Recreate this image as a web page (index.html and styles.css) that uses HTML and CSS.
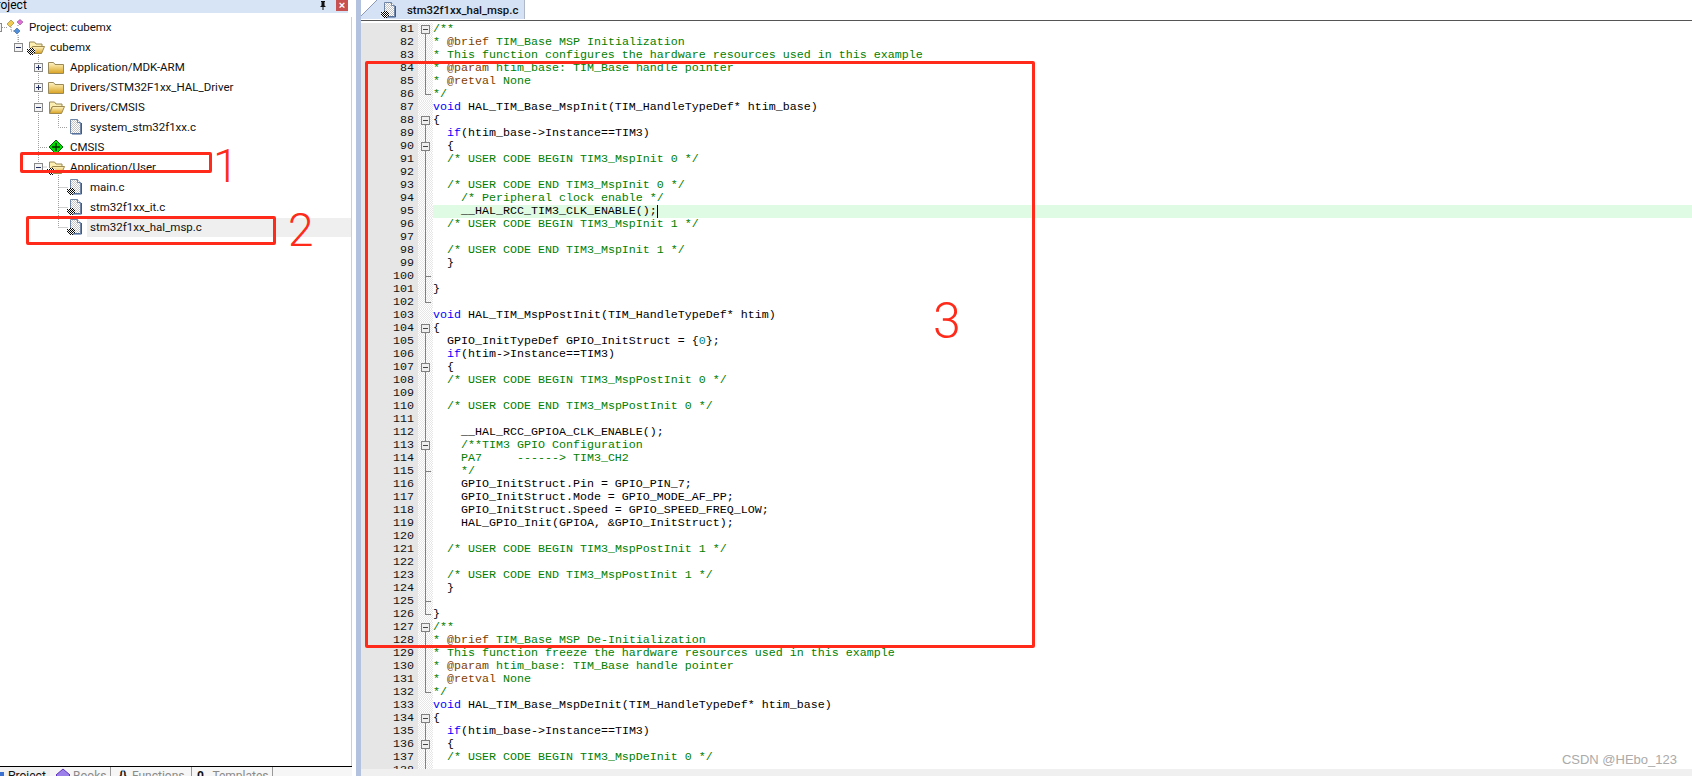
FILE: index.html
```html
<!DOCTYPE html>
<html lang="en">
<head>
<meta charset="utf-8">
<title>stm32f1xx_hal_msp.c</title>
<link rel="stylesheet" href="styles.css">
</head>
<body>
<svg class="defs" aria-hidden="true">
  <defs>
    <linearGradient id="gold" x1="0" y1="0" x2="0" y2="1"><stop offset="0" stop-color="#fff6c8"/><stop offset="1" stop-color="#d9a21f"/></linearGradient>
    <pattern id="chk" width="2" height="2" patternUnits="userSpaceOnUse"><rect width="2" height="2" fill="#fff"/><rect width="1" height="1" fill="#000"/><rect x="1" y="1" width="1" height="1" fill="#000"/></pattern>
    <pattern id="dith" width="2" height="2" patternUnits="userSpaceOnUse"><rect width="2" height="2" fill="#fff"/><rect width="1" height="1" fill="#c4c4c4"/><rect x="1" y="1" width="1" height="1" fill="#c4c4c4"/></pattern>
    <symbol id="folder" viewBox="0 0 18 16"><path d="M1.5 3.5h5l1.5 2h8.500v9h-15z" fill="url(#gold)" stroke="#9a8a5a"/></symbol>
    <symbol id="open" viewBox="0 0 18 16"><path d="M2.500 3h5l1.500 2h6v3H5L2.500 14z" fill="#fbeeb0" stroke="#9a8a5a"/><path d="M2.500 14.500 5.500 7.500h12l-3 7z" fill="url(#gold)" stroke="#a08a50"/></symbol>
    <symbol id="file" viewBox="0 0 18 16"><path d="M3.500.5h7l3 3v11h-10z" fill="url(#dith)" stroke="#6f86a8"/><path d="M10.500.5v3h3" fill="#fff" stroke="#6f86a8"/><path d="M14.500 4v11H5" fill="none" stroke="#3c5c90"/></symbol>
    <symbol id="key" viewBox="0 0 18 16"><path d="M2 9h4v1h2v4H6v2H2v-2H0v-4h2z" fill="url(#chk)"/></symbol>
    <symbol id="gem" viewBox="0 0 18 16"><path d="M9 1l7 7-7 7-7-7z" fill="#00e000" stroke="#006000"/><path d="M9 4v8M5 8h8" stroke="#003000" stroke-width="1.500"/></symbol>
    <symbol id="proj" viewBox="0 0 18 16"><path d="M1 5l4-4 3 3-4 4z" fill="#f2cc50" stroke="#8a7a30" stroke-width=".6"/><path d="M9 9l3-3 3 3-3 3z" fill="#4f8fdc" stroke="#305a90" stroke-width=".6" transform="translate(-1 3)"/><path d="M11 3l3-2.500L17 3l-3 3z" fill="#e070d8" stroke="#8a4a90" stroke-width=".6"/><path d="M5 8v4h4M12 6v2" fill="none" stroke="#8a8a8a" stroke-dasharray="1 1"/></symbol>
  </defs>
</svg>
<div class="app">
  <aside class="side">
    <div class="title">
      <span class="title-text">Project</span>
      <svg class="pin" viewBox="0 0 8 9"><path d="M2 0h4v1H5.500v3.500L7 6H4.500v3h-1V6H1l1.500-1.500V1H2z" fill="#111"/></svg>
      <span class="close">×</span>
    </div>
    <div class="tree">
      <svg class="guides" viewBox="0 17 352 749">
        <path d="M2 27.500h5M18 35v9M38.500 53v94.500H47M38.500 147v20H47M58.500 113v14.500H68M58.500 173v54.500M58.500 187.500H68M58.500 207.500H68M58.500 227.500H68M18.500 37v10" fill="none" stroke="#a0a0a0" stroke-dasharray="1 1"/>
      </svg>
      <div class="row d0"><span class="exp"></span><svg class="ic"><use href="#proj"/></svg><span class="lbl">Project: cubemx</span></div>
      <div class="row d1"><span class="exp minus"></span><svg class="ic"><use href="#open"/><use href="#key"/></svg><span class="lbl">cubemx</span></div>
      <div class="row d2"><span class="exp plus"></span><svg class="ic"><use href="#folder"/></svg><span class="lbl">Application/MDK-ARM</span></div>
      <div class="row d2"><span class="exp plus"></span><svg class="ic"><use href="#folder"/></svg><span class="lbl">Drivers/STM32F1xx_HAL_Driver</span></div>
      <div class="row d2"><span class="exp minus"></span><svg class="ic"><use href="#open"/></svg><span class="lbl">Drivers/CMSIS</span></div>
      <div class="row d3"><span class="exp none"></span><svg class="ic"><use href="#file"/></svg><span class="lbl">system_stm32f1xx.c</span></div>
      <div class="row d2"><span class="exp none"></span><svg class="ic"><use href="#gem"/></svg><span class="lbl">CMSIS</span></div>
      <div class="row d2"><span class="exp minus"></span><svg class="ic"><use href="#open"/><use href="#key"/></svg><span class="lbl">Application/User</span></div>
      <div class="row d3"><span class="exp none"></span><svg class="ic"><use href="#file"/><use href="#key"/></svg><span class="lbl">main.c</span></div>
      <div class="row d3"><span class="exp none"></span><svg class="ic"><use href="#file"/><use href="#key"/></svg><span class="lbl">stm32f1xx_it.c</span></div>
      <div class="row d3"><span class="exp none"></span><svg class="ic"><use href="#file"/><use href="#key"/></svg><span class="lbl sel">stm32f1xx_hal_msp.c</span></div>
    </div>
    <div class="tabs">
      <span class="tab t-project"><i class="t-blue"></i>Project</span>
      <span class="tab t-books"><svg class="t-gem" viewBox="0 0 16 16"><path d="M8 1l7 6-7 7-7-7z" fill="#9a80e8" stroke="#6030c0"/></svg>Books</span>
      <span class="tab t-funcs"><b>{}</b>Functions</span>
      <span class="tab t-temps"><b>0.</b>Templates</span>
    </div>
  </aside>
  <div class="splitter"></div>
  <main class="main">
    <div class="tabbar">
      <div class="filetab">
        <svg class="ic tab-ic"><use href="#file"/><use href="#key"/></svg>
        <span>stm32f1xx_hal_msp.c</span>
      </div>
    </div>
    <div class="editor">
      <div class="r"><span class="n">81</span><span class="f s"><i></i></span><span class="c"><span class="g">/**</span></span></div>
      <div class="r"><span class="n">82</span><span class="f l"></span><span class="c"><span class="g">* <span class="d">@brief</span> TIM_Base MSP Initialization</span></span></div>
      <div class="r"><span class="n">83</span><span class="f l"></span><span class="c"><span class="g">* This function configures the hardware resources used in this example</span></span></div>
      <div class="r"><span class="n">84</span><span class="f l"></span><span class="c"><span class="g">* <span class="d">@param</span> htim_base: TIM_Base handle pointer</span></span></div>
      <div class="r"><span class="n">85</span><span class="f l"></span><span class="c"><span class="g">* <span class="d">@retval</span> None</span></span></div>
      <div class="r"><span class="n">86</span><span class="f e"></span><span class="c"><span class="g">*/</span></span></div>
      <div class="r"><span class="n">87</span><span class="f"></span><span class="c"><span class="k">void</span> HAL_TIM_Base_MspInit(TIM_HandleTypeDef* htim_base)</span></div>
      <div class="r"><span class="n">88</span><span class="f s"><i></i></span><span class="c">{</span></div>
      <div class="r"><span class="n">89</span><span class="f l"></span><span class="c">  <span class="k">if</span>(htim_base-&gt;Instance==TIM3)</span></div>
      <div class="r"><span class="n">90</span><span class="f l"><i></i></span><span class="c">  {</span></div>
      <div class="r"><span class="n">91</span><span class="f l"></span><span class="c">  <span class="g">/* USER CODE BEGIN TIM3_MspInit 0 */</span></span></div>
      <div class="r"><span class="n">92</span><span class="f l"></span><span class="c"></span></div>
      <div class="r"><span class="n">93</span><span class="f l"></span><span class="c">  <span class="g">/* USER CODE END TIM3_MspInit 0 */</span></span></div>
      <div class="r"><span class="n">94</span><span class="f l"></span><span class="c">    <span class="g">/* Peripheral clock enable */</span></span></div>
      <div class="r hl"><span class="n">95</span><span class="f l"></span><span class="c">    __HAL_RCC_TIM3_CLK_ENABLE();<i class="caret"></i></span></div>
      <div class="r"><span class="n">96</span><span class="f l"></span><span class="c">  <span class="g">/* USER CODE BEGIN TIM3_MspInit 1 */</span></span></div>
      <div class="r"><span class="n">97</span><span class="f l"></span><span class="c"></span></div>
      <div class="r"><span class="n">98</span><span class="f l"></span><span class="c">  <span class="g">/* USER CODE END TIM3_MspInit 1 */</span></span></div>
      <div class="r"><span class="n">99</span><span class="f l"></span><span class="c">  }</span></div>
      <div class="r"><span class="n">100</span><span class="f t"></span><span class="c"></span></div>
      <div class="r"><span class="n">101</span><span class="f l"></span><span class="c">}</span></div>
      <div class="r"><span class="n">102</span><span class="f e"></span><span class="c"></span></div>
      <div class="r"><span class="n">103</span><span class="f"></span><span class="c"><span class="k">void</span> HAL_TIM_MspPostInit(TIM_HandleTypeDef* htim)</span></div>
      <div class="r"><span class="n">104</span><span class="f s"><i></i></span><span class="c">{</span></div>
      <div class="r"><span class="n">105</span><span class="f l"></span><span class="c">  GPIO_InitTypeDef GPIO_InitStruct = {<span class="m">0</span>};</span></div>
      <div class="r"><span class="n">106</span><span class="f l"></span><span class="c">  <span class="k">if</span>(htim-&gt;Instance==TIM3)</span></div>
      <div class="r"><span class="n">107</span><span class="f l"><i></i></span><span class="c">  {</span></div>
      <div class="r"><span class="n">108</span><span class="f l"></span><span class="c">  <span class="g">/* USER CODE BEGIN TIM3_MspPostInit 0 */</span></span></div>
      <div class="r"><span class="n">109</span><span class="f l"></span><span class="c"></span></div>
      <div class="r"><span class="n">110</span><span class="f l"></span><span class="c">  <span class="g">/* USER CODE END TIM3_MspPostInit 0 */</span></span></div>
      <div class="r"><span class="n">111</span><span class="f l"></span><span class="c"></span></div>
      <div class="r"><span class="n">112</span><span class="f l"></span><span class="c">    __HAL_RCC_GPIOA_CLK_ENABLE();</span></div>
      <div class="r"><span class="n">113</span><span class="f l"><i></i></span><span class="c">    <span class="g">/**TIM3 GPIO Configuration</span></span></div>
      <div class="r"><span class="n">114</span><span class="f l"></span><span class="c">    <span class="g">PA7     ------&gt; TIM3_CH2</span></span></div>
      <div class="r"><span class="n">115</span><span class="f t"></span><span class="c">    <span class="g">*/</span></span></div>
      <div class="r"><span class="n">116</span><span class="f l"></span><span class="c">    GPIO_InitStruct.Pin = GPIO_PIN_7;</span></div>
      <div class="r"><span class="n">117</span><span class="f l"></span><span class="c">    GPIO_InitStruct.Mode = GPIO_MODE_AF_PP;</span></div>
      <div class="r"><span class="n">118</span><span class="f l"></span><span class="c">    GPIO_InitStruct.Speed = GPIO_SPEED_FREQ_LOW;</span></div>
      <div class="r"><span class="n">119</span><span class="f l"></span><span class="c">    HAL_GPIO_Init(GPIOA, &amp;GPIO_InitStruct);</span></div>
      <div class="r"><span class="n">120</span><span class="f l"></span><span class="c"></span></div>
      <div class="r"><span class="n">121</span><span class="f l"></span><span class="c">  <span class="g">/* USER CODE BEGIN TIM3_MspPostInit 1 */</span></span></div>
      <div class="r"><span class="n">122</span><span class="f l"></span><span class="c"></span></div>
      <div class="r"><span class="n">123</span><span class="f l"></span><span class="c">  <span class="g">/* USER CODE END TIM3_MspPostInit 1 */</span></span></div>
      <div class="r"><span class="n">124</span><span class="f l"></span><span class="c">  }</span></div>
      <div class="r"><span class="n">125</span><span class="f t"></span><span class="c"></span></div>
      <div class="r"><span class="n">126</span><span class="f e"></span><span class="c">}</span></div>
      <div class="r"><span class="n">127</span><span class="f s"><i></i></span><span class="c"><span class="g">/**</span></span></div>
      <div class="r"><span class="n">128</span><span class="f l"></span><span class="c"><span class="g">* <span class="d">@brief</span> TIM_Base MSP De-Initialization</span></span></div>
      <div class="r"><span class="n">129</span><span class="f l"></span><span class="c"><span class="g">* This function freeze the hardware resources used in this example</span></span></div>
      <div class="r"><span class="n">130</span><span class="f l"></span><span class="c"><span class="g">* <span class="d">@param</span> htim_base: TIM_Base handle pointer</span></span></div>
      <div class="r"><span class="n">131</span><span class="f l"></span><span class="c"><span class="g">* <span class="d">@retval</span> None</span></span></div>
      <div class="r"><span class="n">132</span><span class="f e"></span><span class="c"><span class="g">*/</span></span></div>
      <div class="r"><span class="n">133</span><span class="f"></span><span class="c"><span class="k">void</span> HAL_TIM_Base_MspDeInit(TIM_HandleTypeDef* htim_base)</span></div>
      <div class="r"><span class="n">134</span><span class="f s"><i></i></span><span class="c">{</span></div>
      <div class="r"><span class="n">135</span><span class="f l"></span><span class="c">  <span class="k">if</span>(htim_base-&gt;Instance==TIM3)</span></div>
      <div class="r"><span class="n">136</span><span class="f l"><i></i></span><span class="c">  {</span></div>
      <div class="r"><span class="n">137</span><span class="f l"></span><span class="c">  <span class="g">/* USER CODE BEGIN TIM3_MspDeInit 0 */</span></span></div>
      <div class="r"><span class="n">138</span><span class="f l"></span><span class="c"></span></div>
      <span class="watermark">CSDN @HEbo_123</span>
    </div>
    <div class="statusstrip"></div>
  </main>
</div>
<div class="mark m1"></div><span class="digit d-1">1</span>
<div class="mark m2"></div><span class="digit d-2">2</span>
<div class="mark m3"></div><span class="digit d-3">3</span>
</body>
</html>
```
FILE: styles.css
```css
* { box-sizing: border-box; }
html, body { margin: 0; height: 100%; overflow: hidden; background: #fff; }
body { position: relative; font-family: Roboto, "Noto Sans", sans-serif; font-size: 12px; color: #000; }
.defs { position: absolute; width: 0; height: 0; overflow: hidden; }

.app { display: grid; grid-template-columns: 356px 5px 1fr; height: 776px; }

/* left panel */
.side { display: flex; flex-direction: column; min-width: 0; overflow: hidden; background: #fff; }
.title { display: flex; align-items: flex-start; width: 348px; height: 13px; background: #d7e4f5; overflow: hidden; flex: none; }
.title-text { margin-left: -11px; line-height: 11px; flex: 1; }
.pin { width: 8px; height: 9px; margin: 1px 9px 0 0; flex: none; }
.close { width: 12px; height: 11px; background: #c75050; color: #fff; font: bold 11px/10px "Liberation Sans", sans-serif; text-align: center; flex: none; }

.tree { position: relative; flex: 1; width: 352px; margin-top: 4px; border-right: 1px solid #cfcfcf; overflow: hidden; background: #fff; }
.guides { position: absolute; left: 0; top: 0; width: 352px; height: 749px; }
.row { position: relative; display: flex; align-items: center; height: 20px; white-space: nowrap; }
.d0 { margin-left: -7px; }
.d1 { padding-left: 14px; }
.d2 { padding-left: 34px; }
.d3 { padding-left: 54px; }
.exp { position: relative; flex: none; width: 9px; height: 9px; margin-right: 4px; border: 1px solid #8a8a8a; background: #f4f4f4; }
.exp.none { border-color: transparent; background: none; }
.exp.minus::before, .exp.plus::before { content: ""; position: absolute; left: 1px; top: 3px; width: 5px; height: 1px; background: #222e60; }
.exp.plus::after { content: ""; position: absolute; left: 3px; top: 1px; width: 1px; height: 5px; background: #222e60; }
.ic { flex: none; width: 18px; height: 16px; margin-right: 5px; }
.lbl { font-size: 11.5px; line-height: 19px; color: #111; }
.sel { flex: 1; margin-left: -3px; padding-left: 3px; background: #efefef; }

.tabs { display: flex; flex: none; height: 10px; width: 352px; overflow: hidden; background: #f6f6f6; border-top: 1px solid #000; line-height: 16px; color: #8a8a8a; }
.tab { display: flex; align-items: flex-start; flex: none; padding-top: 1px; white-space: nowrap; }
.t-project { width: 50px; margin-top: -1px; padding: 2px 0 0 0; background: #f0f0f0; color: #111; }
.t-blue { width: 4px; height: 8px; margin: 4px 4px 0 0; background: #3a70d0; flex: none; }
.t-books { width: 61px; padding-left: 5px; border-right: 1px solid #999; }
.t-gem { width: 16px; height: 16px; margin-right: 2px; flex: none; }
.t-funcs { width: 81px; padding-left: 8px; border-right: 1px solid #999; }
.t-temps { width: 81px; padding-left: 5px; border-right: 1px solid #999; }
.tab b { margin-right: 5px; color: #111; font-weight: bold; }

.splitter { background: #b3c3df; }

/* editor */
.main { display: flex; flex-direction: column; min-width: 0; overflow: hidden; background: #fff; }
.tabbar { flex: none; height: 20px; overflow: hidden; background: #fff; }
.filetab { display: flex; align-items: center; width: 164px; height: 19px; padding-left: 20px; background: linear-gradient(135deg, #fff 11px, #8a9ab8 11px, #8a9ab8 12px, #d5e2f5 12px); border-right: 1px solid #b0b8c8; }
.filetab span { font-weight: 500; font-size: 11.4px; line-height: 18px; color: #111; }
.tab-ic { margin-right: 8px; }
.editor { position: relative; flex: 1; min-height: 0; overflow: hidden; padding-top: 2px; border-top: 1px solid #555; background: #fff; font: 11.67px/13px "Liberation Mono", monospace; color: #000; }
.r { display: flex; height: 13px; white-space: pre; }
.n { flex: none; width: 57px; padding-right: 4px; text-align: right; background: #e6e6e6; color: #111; }
.f { display: flex; align-items: center; justify-content: center; flex: none; width: 15px; padding-right: 1px; background: repeating-conic-gradient(#e6e6e6 0 25%, #fff 0 50%) 0 0 / 2px 2px; }
.f i { display: block; width: 9px; height: 9px; border: 1px solid #808080; background: linear-gradient(#444, #444) center / 5px 1px no-repeat #efefef; }
.l { background: linear-gradient(#808080, #808080) 7px 0 / 1px 100% no-repeat, repeating-conic-gradient(#e6e6e6 0 25%, #fff 0 50%) 0 0 / 2px 2px; }
.s { background: linear-gradient(#808080, #808080) 7px 6px / 1px 7px no-repeat, repeating-conic-gradient(#e6e6e6 0 25%, #fff 0 50%) 0 0 / 2px 2px; }
.e { background: linear-gradient(#808080, #808080) 7px 0 / 1px 7px no-repeat, linear-gradient(#808080, #808080) 7px 6px / 6px 1px no-repeat, repeating-conic-gradient(#e6e6e6 0 25%, #fff 0 50%) 0 0 / 2px 2px; }
.t { background: linear-gradient(#808080, #808080) 7px 0 / 1px 100% no-repeat, linear-gradient(#808080, #808080) 7px 6px / 6px 1px no-repeat, repeating-conic-gradient(#e6e6e6 0 25%, #fff 0 50%) 0 0 / 2px 2px; }
.c { flex: 1; min-width: 0; }
.hl .c { background: #e0fbe3; }
.g { color: #008000; }
.k { color: #0000ff; }
.d { color: #804000; }
.m { color: #008080; }
.caret { display: inline-block; width: 0; height: 13px; vertical-align: top; border-left: 1px solid #000; }
.statusstrip { flex: none; height: 7px; background: #f0f0f0; }
.watermark { position: absolute; right: 15px; bottom: 1px; font: 13px/16px "Liberation Sans", sans-serif; color: #aaaaaa; }

/* annotations */
.mark { position: absolute; border: 3px solid #ff2a1a; border-radius: 2px; }
.m1 { left: 20px; top: 152px; width: 192px; height: 21px; }
.m2 { left: 26px; top: 216px; width: 250px; height: 29px; }
.m3 { left: 365px; top: 61px; width: 670px; height: 587px; }
.digit { position: absolute; font-family: Roboto, "Liberation Sans", sans-serif; font-weight: 300; color: #ff2a1a; line-height: 1; }
.d-1 { left: 213px; top: 143px; font-size: 46px; }
.d-2 { left: 288px; top: 207px; font-size: 46px; }
.d-3 { left: 933px; top: 296px; font-size: 50px; }
```
